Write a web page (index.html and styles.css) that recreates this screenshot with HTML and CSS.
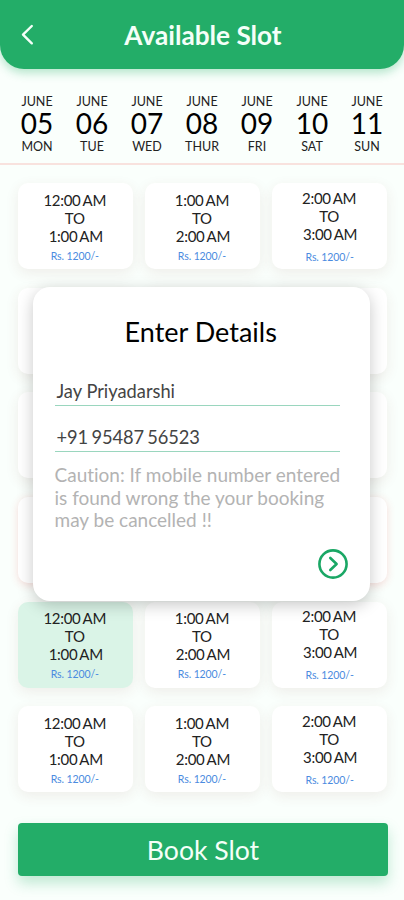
FILE: index.html
```html
<!DOCTYPE html>
<html lang="en">
<head>
<meta charset="utf-8">
<meta name="viewport" content="width=device-width, initial-scale=1">
<title>Available Slot</title>
<link rel="stylesheet" href="styles.css">
</head>
<body>
<main class="screen">
  <header class="topbar">
    <svg class="back" viewBox="0 0 14 22" fill="none" stroke="#f4fff8" stroke-width="2.4" stroke-linecap="round" stroke-linejoin="round"><path d="M11.8 2 3 10.7l8.8 8.6"/></svg>
    <h1 class="title">Available Slot</h1>
  </header>
  <nav class="dates">
    <div class="date"><span>JUNE</span><b>05</b><span>MON</span></div>
    <div class="date"><span>JUNE</span><b>06</b><span>TUE</span></div>
    <div class="date"><span>JUNE</span><b>07</b><span>WED</span></div>
    <div class="date"><span>JUNE</span><b>08</b><span>THUR</span></div>
    <div class="date"><span>JUNE</span><b>09</b><span>FRI</span></div>
    <div class="date"><span>JUNE</span><b>10</b><span>SAT</span></div>
    <div class="date"><span>JUNE</span><b>11</b><span>SUN</span></div>
  </nav>
  <section class="slots">
    <div class="slot"><p>12:00 AM</p><p>TO</p><p>1:00 AM</p><small>Rs. 1200/-</small></div>
    <div class="slot"><p>1:00 AM</p><p>TO</p><p>2:00 AM</p><small>Rs. 1200/-</small></div>
    <div class="slot late"><p>2:00 AM</p><p>TO</p><p>3:00 AM</p><small>Rs. 1200/-</small></div>
    <div class="slot"></div><div class="slot"></div><div class="slot"></div>
    <div class="slot"></div><div class="slot"></div><div class="slot"></div>
    <div class="slot booked"></div><div class="slot booked"></div><div class="slot booked"></div>
    <div class="slot selected"><p>12:00 AM</p><p>TO</p><p>1:00 AM</p><small>Rs. 1200/-</small></div>
    <div class="slot"><p>1:00 AM</p><p>TO</p><p>2:00 AM</p><small>Rs. 1200/-</small></div>
    <div class="slot late"><p>2:00 AM</p><p>TO</p><p>3:00 AM</p><small>Rs. 1200/-</small></div>
    <div class="slot"><p>12:00 AM</p><p>TO</p><p>1:00 AM</p><small>Rs. 1200/-</small></div>
    <div class="slot"><p>1:00 AM</p><p>TO</p><p>2:00 AM</p><small>Rs. 1200/-</small></div>
    <div class="slot late"><p>2:00 AM</p><p>TO</p><p>3:00 AM</p><small>Rs. 1200/-</small></div>
  </section>
  <button class="book">Book Slot</button>
  <section class="dialog">
    <h2 class="heading">Enter Details</h2>
    <div class="field name">Jay Priyadarshi</div>
    <div class="field phone">+91 95487 56523</div>
    <p class="caution">Caution: If mobile number entered<br>is found wrong the your booking<br>may be cancelled !!</p>
    <svg class="next" viewBox="0 0 30 30" fill="none" stroke="#1aa765"><circle cx="15" cy="15" r="13.6" stroke-width="2.6"/><path d="m12.3 9 6.3 6-6.3 6" stroke-width="2.6" stroke-linecap="round" stroke-linejoin="round"/></svg>
  </section>
</main>
</body>
</html>
```
FILE: styles.css
```css
* { box-sizing: border-box; margin: 0; padding: 0; }
body {
  font-family: Lato, "Liberation Sans", sans-serif; font-variant-ligatures: none;
  color: #222; background: #fafffc;
}
.screen { position: relative; width: 404px; height: 900px; overflow: hidden; }
.topbar {
  display: flex; align-items: center; height: 69px; padding: 0 20px;
  background: #23ad68; border-radius: 0 0 24px 24px;
  box-shadow: 0 4px 10px rgba(35, 173, 104, .32);
}
.back { width: 14px; height: 22px; }
.title {
  flex: 1; margin-right: 12px; text-align: center; color: #f4fff8;
  font-size: 26.2px; line-height: 32px; font-weight: 700;
}
.dates {
  display: grid; grid-template-columns: repeat(7, 55px); justify-content: center;
  height: 96px; padding-top: 25px; border-bottom: 2px solid #f8e2de;
}
.date { display: flex; flex-direction: column; align-items: center; font-size: 12.5px; line-height: 15px; }
.date b { font-weight: 400; font-size: 28px; line-height: 28px; margin-bottom: 2px; color: #000; }
.slots {
  display: grid; grid-template-columns: repeat(3, 114.5px); grid-auto-rows: 86px;
  gap: 18.6px 12.7px; padding: 18.3px 18px 0;
}
.slot {
  display: flex; flex-direction: column; align-items: center; padding-top: 7.7px;
  font-size: 15px; line-height: 18px; letter-spacing: -.3px; word-spacing: -1px;
  border-radius: 10px; background: #fff;
  box-shadow: 0 4px 14px rgba(120, 50, 40, .09);
}
.slot p { margin-right: 1px; }
.slot p:nth-child(3) { margin: 0 0 0 1px; }
.slot small { margin: 5px 1px 0 0; font-size: 10.5px; line-height: 13px; letter-spacing: -.1px; word-spacing: 0; color: #4b8be0; }
.late { padding-top: 5.7px; }
.late small { margin: 8px 0 0; }
.booked { box-shadow: 0 2px 8px rgba(235, 60, 60, .18); }
.selected { background: #daf4e7; }
.book {
  display: block; width: 370px; height: 53px; margin: 30.7px 0 0 18px; padding-top: 1px; border: 0; border-radius: 4px;
  font: 400 26.6px/52px Lato, "Liberation Sans", sans-serif; color: #f4fff8; background: #23ad68;
  box-shadow: 0 7px 14px rgba(35, 173, 104, .28);
}
.dialog {
  position: absolute; left: 33px; top: 287px; width: 337px; height: 314px;
  padding: 28px 22px 0 21.5px; border-radius: 17px; background: #fff;
  box-shadow: 0 4px 16px rgba(0, 0, 0, .22);
}
.heading { margin-right: 1px; text-align: center; font-size: 27px; line-height: 34px; font-weight: 400; color: #000; }
.field {
  width: 285.5px; height: 46px; padding: 20px 2px 0; border-bottom: 1px solid #9ad6be;
  font-size: 18.3px; line-height: 22px; color: #444;
}
.name { margin-top: 11px; }
.phone { letter-spacing: -.1px; word-spacing: -1.2px; }
.caution { margin-top: 12px; font-size: 19px; line-height: 22.5px; color: #b3b3b3; white-space: nowrap; }
.next { display: block; width: 30px; height: 30px; margin: 17px 0 0 263px; }
```
